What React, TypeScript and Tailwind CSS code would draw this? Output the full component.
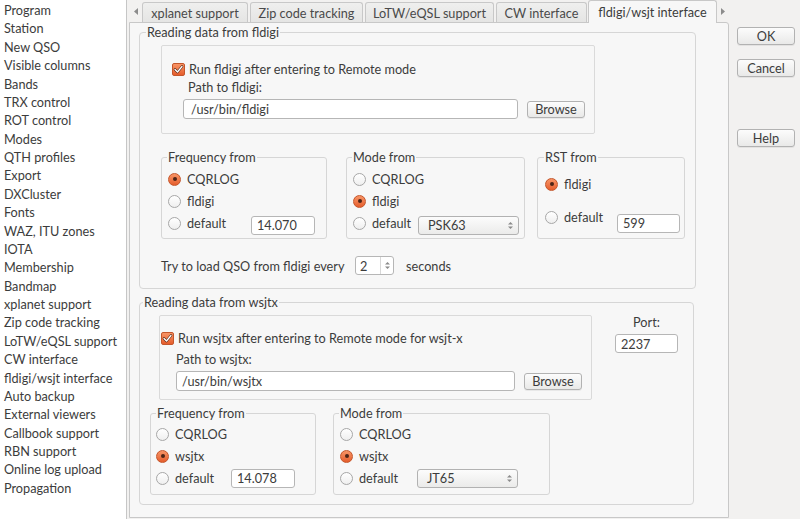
import React from 'react';

const sections = [
  'Program',
  'Station',
  'New QSO',
  'Visible columns',
  'Bands',
  'TRX control',
  'ROT control',
  'Modes',
  'QTH profiles',
  'Export',
  'DXCluster',
  'Fonts',
  'WAZ, ITU zones',
  'IOTA',
  'Membership',
  'Bandmap',
  'xplanet support',
  'Zip code tracking',
  'LoTW/eQSL support',
  'CW interface',
  'fldigi/wsjt interface',
  'Auto backup',
  'External viewers',
  'Callbook support',
  'RBN support',
  'Online log upload',
  'Propagation',
];

const tabs = [
  { label: 'xplanet support', w: 'w-[106px]' },
  { label: 'Zip code tracking', w: 'w-[113px]' },
  { label: 'LoTW/eQSL support', w: 'w-[129px]' },
  { label: 'CW interface', w: 'w-[91px]' },
];

function Radio({ checked }: { checked?: boolean }) {
  if (checked) {
    return (
      <span className="w-[13px] h-[13px] shrink-0 rounded-full border border-[#c4562b] bg-gradient-to-b from-[#f89465] to-[#e55d2b] flex items-center justify-center">
        <span className="w-[4px] h-[4px] rounded-full bg-[#4d2416]" />
      </span>
    );
  }
  return (
    <span className="w-[13px] h-[13px] shrink-0 rounded-full border border-[#a7a7a7] bg-gradient-to-b from-white to-[#efefef]" />
  );
}

function CheckBox() {
  return (
    <span className="w-[13px] h-[13px] shrink-0 rounded-[2px] border border-[#c4562b] bg-gradient-to-b from-[#f89465] to-[#e55d2b] flex items-center justify-center">
      <svg width="11" height="11" viewBox="0 0 11 11">
        <path d="M2 5.5 L4.5 8 L9 2.5" fill="none" stroke="#5a2a18" strokeWidth="2.6" strokeLinecap="round" strokeLinejoin="round" />
        <path d="M2 5.5 L4.5 8 L9 2.5" fill="none" stroke="#ffffff" strokeWidth="1.3" strokeLinecap="round" strokeLinejoin="round" />
      </svg>
    </span>
  );
}

function Field({ value, className }: { value: string; className: string }) {
  return (
    <div className={`bg-white border border-[#b6b6b6] rounded-[3px] pl-[5px] flex items-center shrink-0 ${className}`}>
      {value}
    </div>
  );
}

function Button({ label, className }: { label: string; className: string }) {
  return (
    <div className={`border border-[#b2b2b2] rounded-[3px] bg-gradient-to-b from-[#fcfcfc] to-[#e9e9e8] shadow-[0_1px_0_rgba(0,0,0,0.06)] flex items-center justify-center shrink-0 ${className}`}>
      {label}
    </div>
  );
}

function UpDown() {
  return (
    <svg width="5" height="9" viewBox="0 0 5 9">
      <path d="M0 3.5 L2.5 1 L5 3.5 Z" fill="#8a8a8a" />
      <path d="M0 5.5 L2.5 8 L5 5.5 Z" fill="#8a8a8a" />
    </svg>
  );
}

function Combo({ value }: { value: string }) {
  return (
    <div className="w-[101px] h-[19px] mt-[4px] border border-[#b2b2b2] rounded-[3px] bg-gradient-to-b from-[#fcfcfc] to-[#ebebea] flex items-center pl-[9px] pr-[5px] shrink-0">
      <span className="flex-1">{value}</span>
      <UpDown />
    </div>
  );
}

function Row({ children }: { children: React.ReactNode }) {
  return <div className="h-[16px] flex items-center">{children}</div>;
}

function Option({ checked, label, w }: { checked?: boolean; label: string; w?: string }) {
  return (
    <>
      <Radio checked={checked} />
      <span className={`ml-[6px] ${w ?? ''}`}>{label}</span>
    </>
  );
}

function Legend({ title, ml }: { title: string; ml: string }) {
  return <legend className={`px-[1px] leading-[16px] ${ml}`}>{title}</legend>;
}

export default function App() {
  return (
    <div className="w-[800px] h-[519px] flex bg-[#f2f1f0] text-[12.7px] leading-[16px] text-[#3c3c3c] font-['Lato',sans-serif] overflow-hidden">
      {/* section list */}
      <div className="w-[127px] h-full bg-white border-r border-[#c6c6c6] pt-[1px] pl-[4px]">
        {sections.map((s) => (
          <div key={s} className="leading-[18.38px] whitespace-nowrap">
            {s}
          </div>
        ))}
      </div>

      {/* tabs + page */}
      <div className="w-[602px] h-full pl-[2px] flex flex-col">
        <div className="h-[22px] flex items-end">
          <div className="w-[13px] self-stretch flex items-center justify-center">
            <svg width="4" height="7" viewBox="0 0 4 7">
              <path d="M4 0 L0 3.5 L4 7 Z" fill="#8c8c8c" />
            </svg>
          </div>
          {tabs.map((t) => (
            <div
              key={t.label}
              className={`${t.w} h-[20px] mr-[2px] border border-b-0 border-[#c8c8c8] rounded-t-[3px] bg-gradient-to-b from-[#efefee] to-[#e5e5e4] flex items-center justify-center whitespace-nowrap text-[#4a4a4a]`}
            >
              {t.label}
            </div>
          ))}
          <div className="relative z-10 -ml-[1px] w-[129px] h-[23px] -mb-[1px] border border-b-0 border-[#c8c8c8] rounded-t-[3px] bg-[#f7f7f7] flex items-center justify-center whitespace-nowrap">
            fldigi/wsjt interface
          </div>
          <div className="flex-1 self-stretch flex items-center justify-center">
            <svg width="4" height="7" viewBox="0 0 4 7">
              <path d="M0 0 L4 3.5 L0 7 Z" fill="#8c8c8c" />
            </svg>
          </div>
        </div>

        <div className="flex-1 mb-[1px] bg-[#f7f7f7] border border-[#c8c8c8] rounded-tr-[3px] pl-[9px] pt-[1px]">
          {/* fldigi group */}
          <fieldset className="w-[557px] h-[265px] border border-[#d6d6d6] rounded-[4px]">
            <Legend title="Reading data from fldigi" ml="ml-[6px]" />
            <div className="pl-[21px] pt-[5px]">
              <div className="w-[434px] h-[89px] border border-[#dadada] rounded-[2px] pl-[10px] pt-[15px]">
                <Row>
                  <CheckBox />
                  <span className="ml-[4px]">Run fldigi after entering to Remote mode</span>
                </Row>
                <div className="mt-[2px] ml-[16px]">Path to fldigi:</div>
                <div className="mt-[4px] flex items-center">
                  <Field value="/usr/bin/fldigi" className="ml-[11px] w-[335px] h-[20px] pl-[7px]" />
                  <Button label="Browse" className="ml-[9px] w-[58px] h-[17px]" />
                </div>
              </div>

              <div className="mt-[15px] flex items-start">
                <fieldset className="w-[166px] h-[90px] border border-[#d6d6d6] rounded-[3px]">
                  <Legend title="Frequency from" ml="ml-[5px]" />
                  <div className="pl-[6px] pt-[6px] flex flex-col gap-[6px]">
                    <Row>
                      <Option checked label="CQRLOG" />
                    </Row>
                    <Row>
                      <Option label="fldigi" />
                    </Row>
                    <Row>
                      <Option label="default" w="w-[64px]" />
                      <Field value="14.070" className="w-[64px] h-[19px] mt-[4px]" />
                    </Row>
                  </div>
                </fieldset>

                <fieldset className="ml-[19px] w-[179px] h-[90px] border border-[#d6d6d6] rounded-[3px]">
                  <Legend title="Mode from" ml="ml-[5px]" />
                  <div className="pl-[6px] pt-[6px] flex flex-col gap-[6px]">
                    <Row>
                      <Option label="CQRLOG" />
                    </Row>
                    <Row>
                      <Option checked label="fldigi" />
                    </Row>
                    <Row>
                      <Option label="default" w="w-[46px]" />
                      <Combo value="PSK63" />
                    </Row>
                  </div>
                </fieldset>

                <fieldset className="ml-[12px] w-[148px] h-[90px] border border-[#d6d6d6] rounded-[3px]">
                  <Legend title="RST from" ml="ml-[6px]" />
                  <div className="pl-[7px] pt-[11px] flex flex-col gap-[17px]">
                    <Row>
                      <Option checked label="fldigi" />
                    </Row>
                    <Row>
                      <Option label="default" w="w-[53px]" />
                      <Field value="599" className="w-[63px] h-[19px] mt-[12px] pl-[3px]" />
                    </Row>
                  </div>
                </fieldset>
              </div>

              <div className="mt-[17px] flex items-center">
                <span className="w-[194px]">Try to load QSO from fldigi every</span>
                <div className="w-[39px] h-[19px] bg-white border border-[#b6b6b6] rounded-[3px] flex items-stretch">
                  <span className="flex-1 pl-[4px] flex items-center">2</span>
                  <span className="w-[13px] border-l border-[#d8d8d8] flex items-center justify-center">
                    <UpDown />
                  </span>
                </div>
                <span className="ml-[12px]">seconds</span>
              </div>
            </div>
          </fieldset>

          {/* wsjtx group */}
          <fieldset className="mt-[5px] w-[555px] h-[211px] border border-[#d6d6d6] rounded-[4px]">
            <Legend title="Reading data from wsjtx" ml="ml-[3px]" />
            <div className="mt-[4px] flex items-start">
              <div className="ml-[19px] mt-[1px] w-[433px] h-[85px] border border-[#dadada] rounded-[2px] pl-[1px] pt-[14px]">
                <Row>
                  <CheckBox />
                  <span className="ml-[4px]">Run wsjtx after entering to Remote mode for wsjt-x</span>
                </Row>
                <div className="mt-[5px] ml-[15px]">Path to wsjtx:</div>
                <div className="mt-[4px] flex items-center">
                  <Field value="/usr/bin/wsjtx" className="ml-[15px] w-[339px] h-[20px]" />
                  <Button label="Browse" className="ml-[9px] w-[58px] h-[17px]" />
                </div>
              </div>
              <div className="ml-[23px] w-[63px] flex flex-col items-center">
                <span>Port:</span>
                <Field value="2237" className="mt-[4px] w-[63px] h-[19px] pl-[3px]" />
              </div>
            </div>

            <div className="mt-[5px] ml-[10px] flex items-start">
              <fieldset className="w-[166px] h-[90px] border border-[#d6d6d6] rounded-[3px]">
                <Legend title="Frequency from" ml="ml-[5px]" />
                <div className="pl-[5px] pt-[5px] flex flex-col gap-[6px]">
                  <Row>
                    <Option label="CQRLOG" />
                  </Row>
                  <Row>
                    <Option checked label="wsjtx" />
                  </Row>
                  <Row>
                    <Option label="default" w="w-[56px]" />
                    <Field value="14.078" className="w-[64px] h-[19px]" />
                  </Row>
                </div>
              </fieldset>

              <fieldset className="ml-[17px] w-[217px] h-[90px] border border-[#d6d6d6] rounded-[3px]">
                <Legend title="Mode from" ml="ml-[5px]" />
                <div className="pl-[6px] pt-[5px] flex flex-col gap-[6px]">
                  <Row>
                    <Option label="CQRLOG" />
                  </Row>
                  <Row>
                    <Option checked label="wsjtx" />
                  </Row>
                  <Row>
                    <Option label="default" w="w-[58px]" />
                    <div className="-mt-[4px]">
                      <Combo value="JT65" />
                    </div>
                  </Row>
                </div>
              </fieldset>
            </div>
          </fieldset>
        </div>
      </div>

      {/* dialog buttons */}
      <div className="w-[71px] h-full pl-[8px] pt-[27px] flex flex-col">
        <Button label="OK" className="w-[58px] h-[18px]" />
        <Button label="Cancel" className="mt-[14px] w-[58px] h-[18px]" />
        <Button label="Help" className="mt-[52px] w-[58px] h-[18px]" />
      </div>
    </div>
  );
}
